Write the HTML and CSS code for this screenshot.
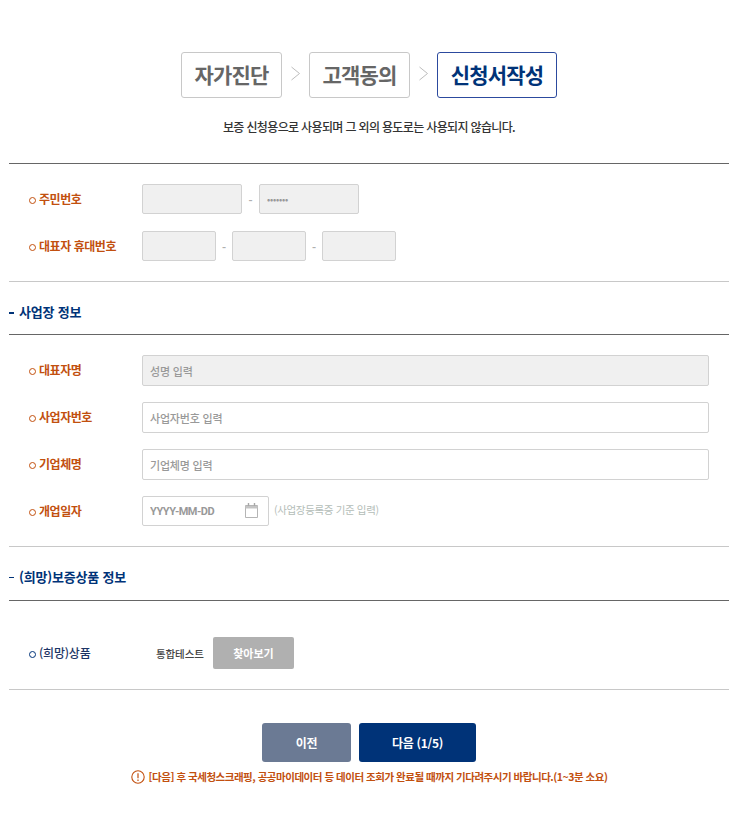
FILE: index.html
```html
<!DOCTYPE html>
<html lang="ko">
<head>
  <meta charset="UTF-8" />
  <meta name="viewport" content="width=device-width, initial-scale=1.0"/>
  <title>신청서작성</title>
  <link rel="stylesheet" href="styles.css">
</head>
<body>
  <div class="wrap">
    <div class="steps">
      <span class="step">자가진단</span>
      <svg class="step-arrow" width="11" height="15" viewBox="0 0 11 15"><path d="M1.5 1l8 6.5-8 6.5" fill="none" stroke="#bdbdbd" stroke-width="1"/></svg>
      <span class="step">고객동의</span>
      <svg class="step-arrow" width="11" height="15" viewBox="0 0 11 15"><path d="M1.5 1l8 6.5-8 6.5" fill="none" stroke="#bdbdbd" stroke-width="1"/></svg>
      <span class="step on">신청서작성</span>
    </div>
    <p class="notice">보증 신청용으로 사용되며 그 외의 용도로는 사용되지 않습니다.</p>

    <div class="section first">
      <div class="row">
        <label class="label">주민번호</label>
        <div class="fields">
          <input class="input w100 off" type="text">
          <span class="dash">-</span>
          <input class="input w100 off mask" type="text" placeholder="•••••••">
        </div>
      </div>
      <div class="row">
        <label class="label">대표자 휴대번호</label>
        <div class="fields">
          <input class="input w74 off" type="text">
          <span class="dash">-</span>
          <input class="input w74 off" type="text">
          <span class="dash">-</span>
          <input class="input w74 off" type="text">
        </div>
      </div>
    </div>

    <h3 class="sec-title">사업장 정보</h3>
    <div class="section">
      <div class="row">
        <label class="label">대표자명</label>
        <div class="fields"><input class="input full off" type="text" placeholder="성명 입력"></div>
      </div>
      <div class="row">
        <label class="label">사업자번호</label>
        <div class="fields"><input class="input full" type="text" placeholder="사업자번호 입력"></div>
      </div>
      <div class="row">
        <label class="label">기업체명</label>
        <div class="fields"><input class="input full" type="text" placeholder="기업체명 입력"></div>
      </div>
      <div class="row">
        <label class="label">개업일자</label>
        <div class="fields">
          <div class="date">
            <input class="date-input" type="text" placeholder="YYYY-MM-DD">
            <svg class="cal" width="13" height="15" viewBox="0 0 13 15">
              <path d="M.5 2.5h12v12H.5z" fill="none" stroke="#b5b5b5"/>
              <path d="M.5 3h12v2.5H.5z" fill="#c4c4c4"/>
              <path d="M3.5 0v3M9.5 0v3" stroke="#a8a8a8" stroke-width="1.4"/>
            </svg>
          </div>
          <span class="hint">(사업장등록증 기준 입력)</span>
        </div>
      </div>
    </div>

    <h3 class="sec-title thin">(희망)보증상품 정보</h3>
    <div class="section goods">
      <div class="row">
        <label class="label navy">(희망)상품</label>
        <div class="fields">
          <span class="goods-name">통합테스트</span>
          <button class="btn-find" type="button">찾아보기</button>
        </div>
      </div>
    </div>

    <div class="btns">
      <button class="btn prev" type="button">이전</button>
      <button class="btn next" type="button">다음 (1/5)</button>
    </div>
    <p class="warn">
      <svg class="warn-icon" width="14" height="14" viewBox="0 0 14 14"><circle cx="7" cy="7" r="6.2" fill="none" stroke="#c2500f" stroke-width="1.1"/><path d="M7 3.2v5M7 9.6v1.4" stroke="#c2500f" stroke-width="1.2"/></svg>
      [다음] 후 국세청스크래핑, 공공마이데이터 등 데이터 조회가 완료될 때까지 기다려주시기 바랍니다.(1~3분 소요)
    </p>
  </div>
</body>
</html>
```

FILE: styles.css
```css
* {
  box-sizing: border-box;
}

body {
  margin: 0;
  background: #fff;
  font-family: "Noto Sans CJK KR", "Noto Sans", sans-serif;
  color: #333;
}

.wrap {
  width: 720px;
  margin-left: 9px;
  padding-top: 52px;
}

.steps {
  display: flex;
  justify-content: center;
  align-items: center;
  gap: 8px;
}

.step {
  display: block;
  width: 101px;
  height: 46px;
  line-height: 43px;
  border: 1px solid #c8c8c8;
  border-radius: 3px;
  text-align: center;
  font-size: 21px;
  font-weight: 700;
  letter-spacing: -0.8px;
  color: #666;
}

.step.on {
  width: 120px;
  border-color: #2c4a9e;
  color: #003378;
}

.step-arrow {
  margin-top: -4px;
}

.notice {
  margin: 19px 0 0;
  height: 46px;
  line-height: 20px;
  text-align: center;
  font-size: 12px;
  font-weight: 500;
  letter-spacing: -0.65px;
  color: #333;
}

.section {
  display: flex;
  flex-direction: column;
  gap: 16px;
  padding: 20px;
  border-top: 1px solid #666;
  border-bottom: 1px solid #c8c8c8;
}

.section.first {
  gap: 17px;
}

.section.goods {
  padding: 36px 20px 20px;
}

.row {
  display: flex;
  align-items: center;
}

.label {
  position: relative;
  display: block;
  width: 113px;
  margin-top: -2px;
  padding-left: 10px;
  font-size: 12px;
  font-weight: 700;
  letter-spacing: -0.45px;
  color: #c2500f;
}

.label::before {
  content: "";
  position: absolute;
  left: 0;
  top: 7px;
  width: 5px;
  height: 5px;
  border: 1.3px solid #c2500f;
  border-radius: 50%;
}

.label.navy {
  font-weight: 500;
  letter-spacing: -0.2px;
  color: #1c3566;
}

.label.navy::before {
  border-color: #003378;
}

.fields {
  display: flex;
  align-items: center;
  flex: 1;
}

.input {
  display: block;
  height: 31px;
  padding: 0 7px;
  border: 1px solid #d2d2d2;
  border-radius: 2px;
  background: #fff;
  font-family: inherit;
  font-size: 11px;
  font-weight: 500;
  letter-spacing: -0.2px;
}

.first .input {
  height: 30px;
}

.input::placeholder,
.date-input::placeholder {
  color: #999;
  opacity: 1;
}

.input.off {
  background: #f0f0f0;
}

.w100 {
  width: 100px;
}

.w74 {
  width: 74px;
}

.full {
  width: 567px;
}

.mask {
  font-size: 9px;
}

.dash {
  width: 17px;
  margin-top: 2px;
  text-align: center;
  font-size: 11px;
  font-weight: 700;
  color: #b0b0b0;
}

.w74 + .dash {
  width: 16px;
}

.date {
  display: flex;
  align-items: center;
  width: 127px;
  height: 30px;
  padding: 0 10px 0 7px;
  border: 1px solid #d2d2d2;
  border-radius: 2px;
}

.date-input {
  width: 90px;
  margin-top: 1px;
  border: 0;
  padding: 0;
  outline: 0;
  font-family: Roboto, sans-serif;
  font-size: 11px;
  font-weight: 700;
  letter-spacing: -0.5px;
}

.cal {
  margin-left: auto;
  margin-top: -2px;
}

.hint {
  margin: -3px 0 0 5px;
  font-size: 10.5px;
  letter-spacing: -0.35px;
  color: #b4bdb8;
}

.sec-title {
  position: relative;
  height: 52px;
  margin: 0;
  padding-left: 10px;
  line-height: 59px;
  font-size: 13px;
  font-weight: 700;
  letter-spacing: -0.2px;
  color: #003378;
}

.sec-title::before {
  content: "";
  position: absolute;
  left: 0;
  top: 30px;
  width: 5px;
  height: 2px;
  background: #003378;
}

.sec-title.thin {
  height: 53px;
}

.sec-title.thin::before {
  height: 1px;
}

.goods-name {
  width: 71px;
  padding-left: 14px;
  white-space: nowrap;
  font-size: 10.5px;
  font-weight: 500;
  letter-spacing: -0.1px;
  color: #444;
}

.btn-find {
  width: 81px;
  height: 32px;
  border: 0;
  border-radius: 2px;
  background: #b0b0b0;
  font-family: inherit;
  font-size: 11px;
  font-weight: 700;
  color: #fff;
}

.btns {
  display: flex;
  justify-content: center;
  gap: 8px;
  margin-top: 33px;
}

.btn {
  height: 39px;
  border: 0;
  border-radius: 3px;
  font-family: inherit;
  font-size: 12px;
  font-weight: 700;
  letter-spacing: -0.3px;
  color: #fff;
}

.prev {
  width: 89px;
  background: #6b7a94;
}

.next {
  width: 117px;
  background: #003378;
}

.warn {
  display: flex;
  justify-content: center;
  align-items: center;
  gap: 4px;
  margin: 5px 0 0;
  height: 18px;
  white-space: nowrap;
  font-size: 10.5px;
  font-weight: 700;
  letter-spacing: -0.48px;
  color: #c2500f;
}

.warn-icon {
  margin-top: 2px;
}
```
